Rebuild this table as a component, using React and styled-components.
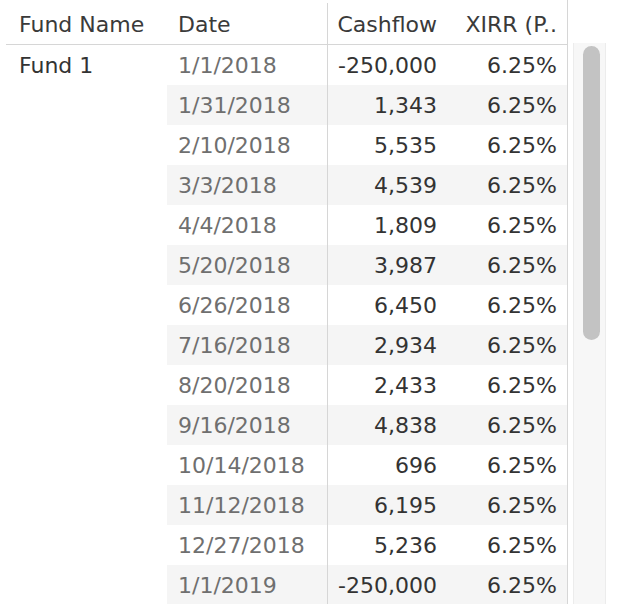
import styled, { createGlobalStyle } from 'styled-components';

const GlobalStyle = createGlobalStyle`
  body {
    margin: 0;
    background: #fff;
    font-family: 'DejaVu Sans', sans-serif;
  }
`;

const rows = [
  ['1/1/2018', '-250,000'],
  ['1/31/2018', '1,343'],
  ['2/10/2018', '5,535'],
  ['3/3/2018', '4,539'],
  ['4/4/2018', '1,809'],
  ['5/20/2018', '3,987'],
  ['6/26/2018', '6,450'],
  ['7/16/2018', '2,934'],
  ['8/20/2018', '2,433'],
  ['9/16/2018', '4,838'],
  ['10/14/2018', '696'],
  ['11/12/2018', '6,195'],
  ['12/27/2018', '5,236'],
  ['1/1/2019', '-250,000'],
];

const App = () => {
  return (
    <>
      <GlobalStyle />
      <Page>
        <Table>
          <HeaderRow>
            <HeadCell>Fund Name</HeadCell>
            <HeadCell>Date</HeadCell>
            <HeadCell $right $divider>Cashflow</HeadCell>
            <HeadCell $right>XIRR (P..</HeadCell>
          </HeaderRow>
          {rows.map(([date, cash], i) => (
            <Row key={date + i}>
              <Cell $dark>{i === 0 ? 'Fund 1' : ''}</Cell>
              <Cell $band={i % 2 === 1}>{date}</Cell>
              <Cell $band={i % 2 === 1} $right $dark $divider>{cash}</Cell>
              <Cell $band={i % 2 === 1} $right $dark>6.25%</Cell>
            </Row>
          ))}
        </Table>
        <Track>
          <Thumb />
        </Track>
      </Page>
    </>
  );
};

const Page = styled.div`
  display: flex;
  width: 628px;
  height: 604px;
  overflow: hidden;
`;

const Table = styled.div`
  margin-left: 6px;
  width: 561px;
  border-right: 1px solid #d6d6d6;
  padding-top: 3px;
`;

const grid = `
  display: grid;
  grid-template-columns: 161px 160px 120px 120px;
`;

const HeaderRow = styled.div`
  ${grid}
  height: 41px;
  border-bottom: 1px solid #d6d6d6;
`;

const HeadCell = styled.div`
  display: flex;
  align-items: center;
  justify-content: ${(p) => (p.$right ? 'flex-end' : 'flex-start')};
  padding: 2px ${(p) => (p.$right ? '10px' : '0')} 0 ${(p) => (p.$right ? '0' : '13px')};
  border-left: ${(p) => (p.$divider ? '1px solid #d6d6d6' : 'none')};
  color: #3a3a3a;
  font-size: 22px;
  white-space: nowrap;
  &:nth-child(2) {
    padding-left: 11px;
  }
`;

const Row = styled.div`
  ${grid}
  height: 40px;
`;

const Cell = styled.div`
  display: flex;
  align-items: center;
  justify-content: ${(p) => (p.$right ? 'flex-end' : 'flex-start')};
  padding: 0 ${(p) => (p.$right ? '10px' : '0')} 0 ${(p) => (p.$right ? '0' : '13px')};
  background: ${(p) => (p.$band ? '#f5f5f5' : 'transparent')};
  border-left: ${(p) => (p.$divider ? '1px solid #d6d6d6' : 'none')};
  color: ${(p) => (p.$dark ? '#333' : '#6f6f6f')};
  font-size: 22px;
  white-space: nowrap;
  &:nth-child(2) {
    padding-left: 11px;
  }
`;

const Track = styled.div`
  margin: 43px 0 0 5px;
  width: 33px;
  background: #f7f7f7;
  border-left: 1px solid #ececec;
  border-right: 1px solid #ececec;
  box-sizing: border-box;
  padding: 3px 0 0 9px;
`;

const Thumb = styled.div`
  width: 17px;
  height: 294px;
  border-radius: 9px;
  background: #c3c3c3;
`;

export default App;
